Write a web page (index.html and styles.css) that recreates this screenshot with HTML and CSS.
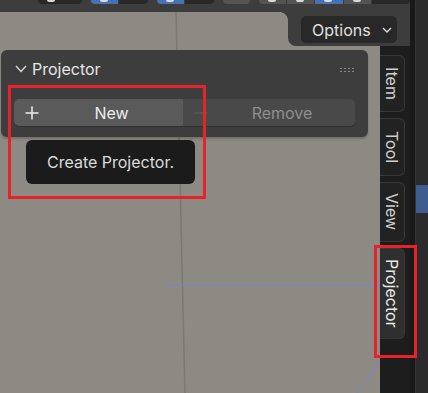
FILE: index.html
```html
<!DOCTYPE html>
<html lang="en">
<head>
  <meta charset="UTF-8">
  <title>Projector</title>
  <link rel="stylesheet" href="styles.css">
</head>
<body>

  <div class="screen">
    <div class="editor">
      <div class="topbar">
        <div class="tb-group"><span class="seg dark w44"><i class="tip"></i></span></div>
        <div class="tb-group"><span class="seg blue w27"><i class="tip"></i></span><span class="seg dark w29"></span></div>
        <div class="tb-group"><span class="seg blue w27"><i class="tip"></i></span><span class="seg dark w29"></span></div>
        <div class="tb-group"><span class="seg grey w27"></span></div>
        <div class="tb-group">
          <span class="seg grey w27"><i class="tip"></i></span>
          <span class="seg grey w27"><i class="tip"></i></span>
          <span class="seg blue w28"><i class="tip"></i></span>
          <span class="seg grey w27"><i class="tip"></i></span>
          <span class="seg dark w38"></span>
        </div>
      </div>

      <div class="main">
        <div class="viewport">
          <svg class="lines" width="380" height="381" viewBox="0 0 380 381">
            <line x1="176" y1="0" x2="185" y2="381" stroke="#7b7872" stroke-width="1.5"/>
            <line x1="166" y1="273" x2="380" y2="273" stroke="#7d80d4" stroke-width="1"/>
            <line x1="357" y1="381" x2="381" y2="348" stroke="#7d80d4" stroke-width="1"/>
          </svg>

          <div class="panel">
            <div class="panel-head">
              <svg class="chev" width="12" height="8" viewBox="0 0 12 8">
                <polyline points="1,1 6,6.5 11,1" fill="none" stroke="#d8d8d8" stroke-width="1.4"/>
              </svg>
              <span class="panel-title">Projector</span>
              <span class="grip">
                <i></i><i></i><i></i><i></i><i></i><i></i><i></i><i></i>
              </span>
            </div>
            <div class="btn-row">
              <div class="btn btn-new">
                <svg class="icon" width="14" height="14" viewBox="0 0 14 14">
                  <path d="M7 0.5V13.5M0.5 7H13.5" stroke="#f0f0f0" stroke-width="1.5"/>
                </svg>
                <span>New</span>
              </div>
              <div class="btn btn-remove">
                <svg class="icon" width="14" height="14" viewBox="0 0 14 14">
                  <path d="M0.5 7H13.5" stroke="#5f5f5f" stroke-width="1.2"/>
                </svg>
                <span>Remove</span>
              </div>
            </div>
          </div>

          <div class="tooltip">Create Projector.</div>
          <div class="mark mark-panel"></div>
        </div>

        <div class="tabs">
          <div class="tab tab-item"><span>Item</span></div>
          <div class="tab tab-tool"><span>Tool</span></div>
          <div class="tab tab-view"><span>View</span></div>
          <div class="tab tab-proj active"><span>Projector</span></div>
        </div>
      </div>

      <div class="header-ext">
        <div class="options">
          <span>Options</span>
          <svg width="10" height="6" viewBox="0 0 10 6">
            <polyline points="1,1 5,5 9,1" fill="none" stroke="#d8d8d8" stroke-width="1.4"/>
          </svg>
        </div>
      </div>
    </div>

    <div class="gutter"></div>
    <div class="outliner"><div class="sel"></div></div>

    <div class="mark mark-tab"></div>
  </div>

</body>
</html>
```

FILE: styles.css
```css
body {
  margin: 0;
  background: #2a2a2a;
  font-family: Inter, "Noto Sans", sans-serif;
  color: #e2e2e2;
}

.screen {
  position: relative;
  display: flex;
  width: 428px;
  height: 393px;
  overflow: hidden;
}

.editor {
  position: relative;
  width: 410px;
  display: flex;
  flex-direction: column;
  background: #3d3d3d;
}

/* top toolbar, only the bottoms of the buttons are visible */
.topbar {
  height: 12px;
  display: flex;
  gap: 9px;
  padding-left: 38px;
}

.tb-group {
  display: flex;
  gap: 1px;
  height: 4px;
  border-radius: 0 0 5px 5px;
  overflow: hidden;
}

.seg {
  position: relative;
  height: 4px;
}

.seg .tip {
  position: absolute;
  left: 9px;
  top: 0;
  width: 8px;
  height: 2px;
  border-radius: 0 0 3px 3px;
  background: #d8d8d8;
}

.dark { background: #282828; }
.blue { background: #4772b3; }
.grey { background: #545454; }

.w27 { width: 27px; }
.w28 { width: 28px; }
.w29 { width: 29px; }
.w38 { width: 38px; }
.w44 { width: 44px; }

.main {
  flex: 1;
  display: flex;
}

.viewport {
  position: relative;
  width: 380px;
  background: #8d8a83;
  padding-top: 38px;
  padding-left: 1px;
  box-sizing: border-box;
}

.lines {
  position: absolute;
  left: 0;
  top: 0;
}

.panel {
  position: relative;
  width: 367px;
  height: 87px;
  box-sizing: border-box;
  padding: 0 13px;
  background: #3d3d3d;
  border-radius: 6px;
  box-shadow: 0 2px 2px rgba(0, 0, 0, 0.18);
}

.panel-head {
  height: 38px;
  display: flex;
  align-items: center;
}

.chev {
  margin-left: 1px;
  margin-right: 5px;
}

.panel-title {
  flex: 1;
  font-size: 16px;
  color: #e6e6e6;
}

.grip {
  display: grid;
  grid-template-columns: repeat(4, 2px);
  gap: 2px 2px;
  margin-right: 1px;
  margin-top: 1px;
}

.grip i {
  width: 2px;
  height: 1px;
  background: #8b8b8b;
}

.btn-row {
  display: flex;
  margin-top: 11px;
  height: 27px;
  border-radius: 5px;
  overflow: hidden;
  box-shadow: 0 1px 0 #2f2f2f;
}

.btn {
  position: relative;
  flex: 1;
  display: flex;
  align-items: center;
  justify-content: center;
  padding-left: 26px;
  font-size: 16px;
}

.btn .icon {
  position: absolute;
  left: 11px;
  top: 7px;
}

.btn-new {
  background: #5a5a5a;
  color: #ececec;
  flex: 0 0 169px;
  box-sizing: border-box;
}

.btn-remove {
  background: #494949;
  color: #8e8e8e;
}

.tooltip {
  position: absolute;
  left: 26px;
  top: 128px;
  width: 169px;
  height: 44px;
  display: flex;
  align-items: center;
  justify-content: center;
  background: #1b1b1b;
  border-radius: 6px;
  font-size: 16px;
  color: #dcdcdc;
}

.mark {
  position: absolute;
  box-sizing: border-box;
  border: 3px solid #e8222a;
}

.mark-panel {
  left: 8px;
  top: 73px;
  width: 198px;
  height: 114px;
}

.mark-tab {
  left: 374px;
  top: 245px;
  width: 43px;
  height: 113px;
}

/* sidebar tabs */
.tabs {
  width: 30px;
  background: #1d1d1d;
  padding-top: 43px;
  display: flex;
  flex-direction: column;
  gap: 6px;
}

.tab {
  width: 25px;
  box-sizing: border-box;
  border: 1px solid #383838;
  border-left: none;
  border-radius: 0 6px 6px 0;
  background: #222;
  display: flex;
  align-items: center;
  justify-content: center;
  font-size: 16px;
  color: #cfcfcf;
}

.tab span {
  writing-mode: vertical-rl;
}

.tab-item { height: 57px; }
.tab-tool { height: 58px; }
.tab-view { height: 60px; }
.tab-proj { height: 91px; }

.tab.active {
  background: #2f2f2f;
  color: #e8e8e8;
}

.header-ext {
  position: absolute;
  left: 288px;
  top: 12px;
  width: 122px;
  height: 34px;
  background: #3d3d3d;
  border-bottom-left-radius: 8px;
  padding: 4px 0 0 13px;
  box-sizing: border-box;
}

.header-ext::before {
  content: "";
  position: absolute;
  left: -8px;
  top: 0;
  width: 8px;
  height: 8px;
  background: radial-gradient(circle at 0 100%, transparent 7.5px, #3d3d3d 8px);
}

.options {
  width: 96px;
  height: 27px;
  box-sizing: border-box;
  padding: 0 5px 0 11px;
  display: flex;
  align-items: center;
  justify-content: space-between;
  background: #282828;
  border-radius: 5px;
  font-size: 16px;
  color: #e0e0e0;
}

.gutter {
  width: 5px;
  background: #191919;
  border-right: 1px solid #333;
}

.outliner {
  flex: 1;
  background: #2b2b2b;
  padding-top: 185px;
}

.sel {
  height: 28px;
  background: #3f5c8f;
}
```
